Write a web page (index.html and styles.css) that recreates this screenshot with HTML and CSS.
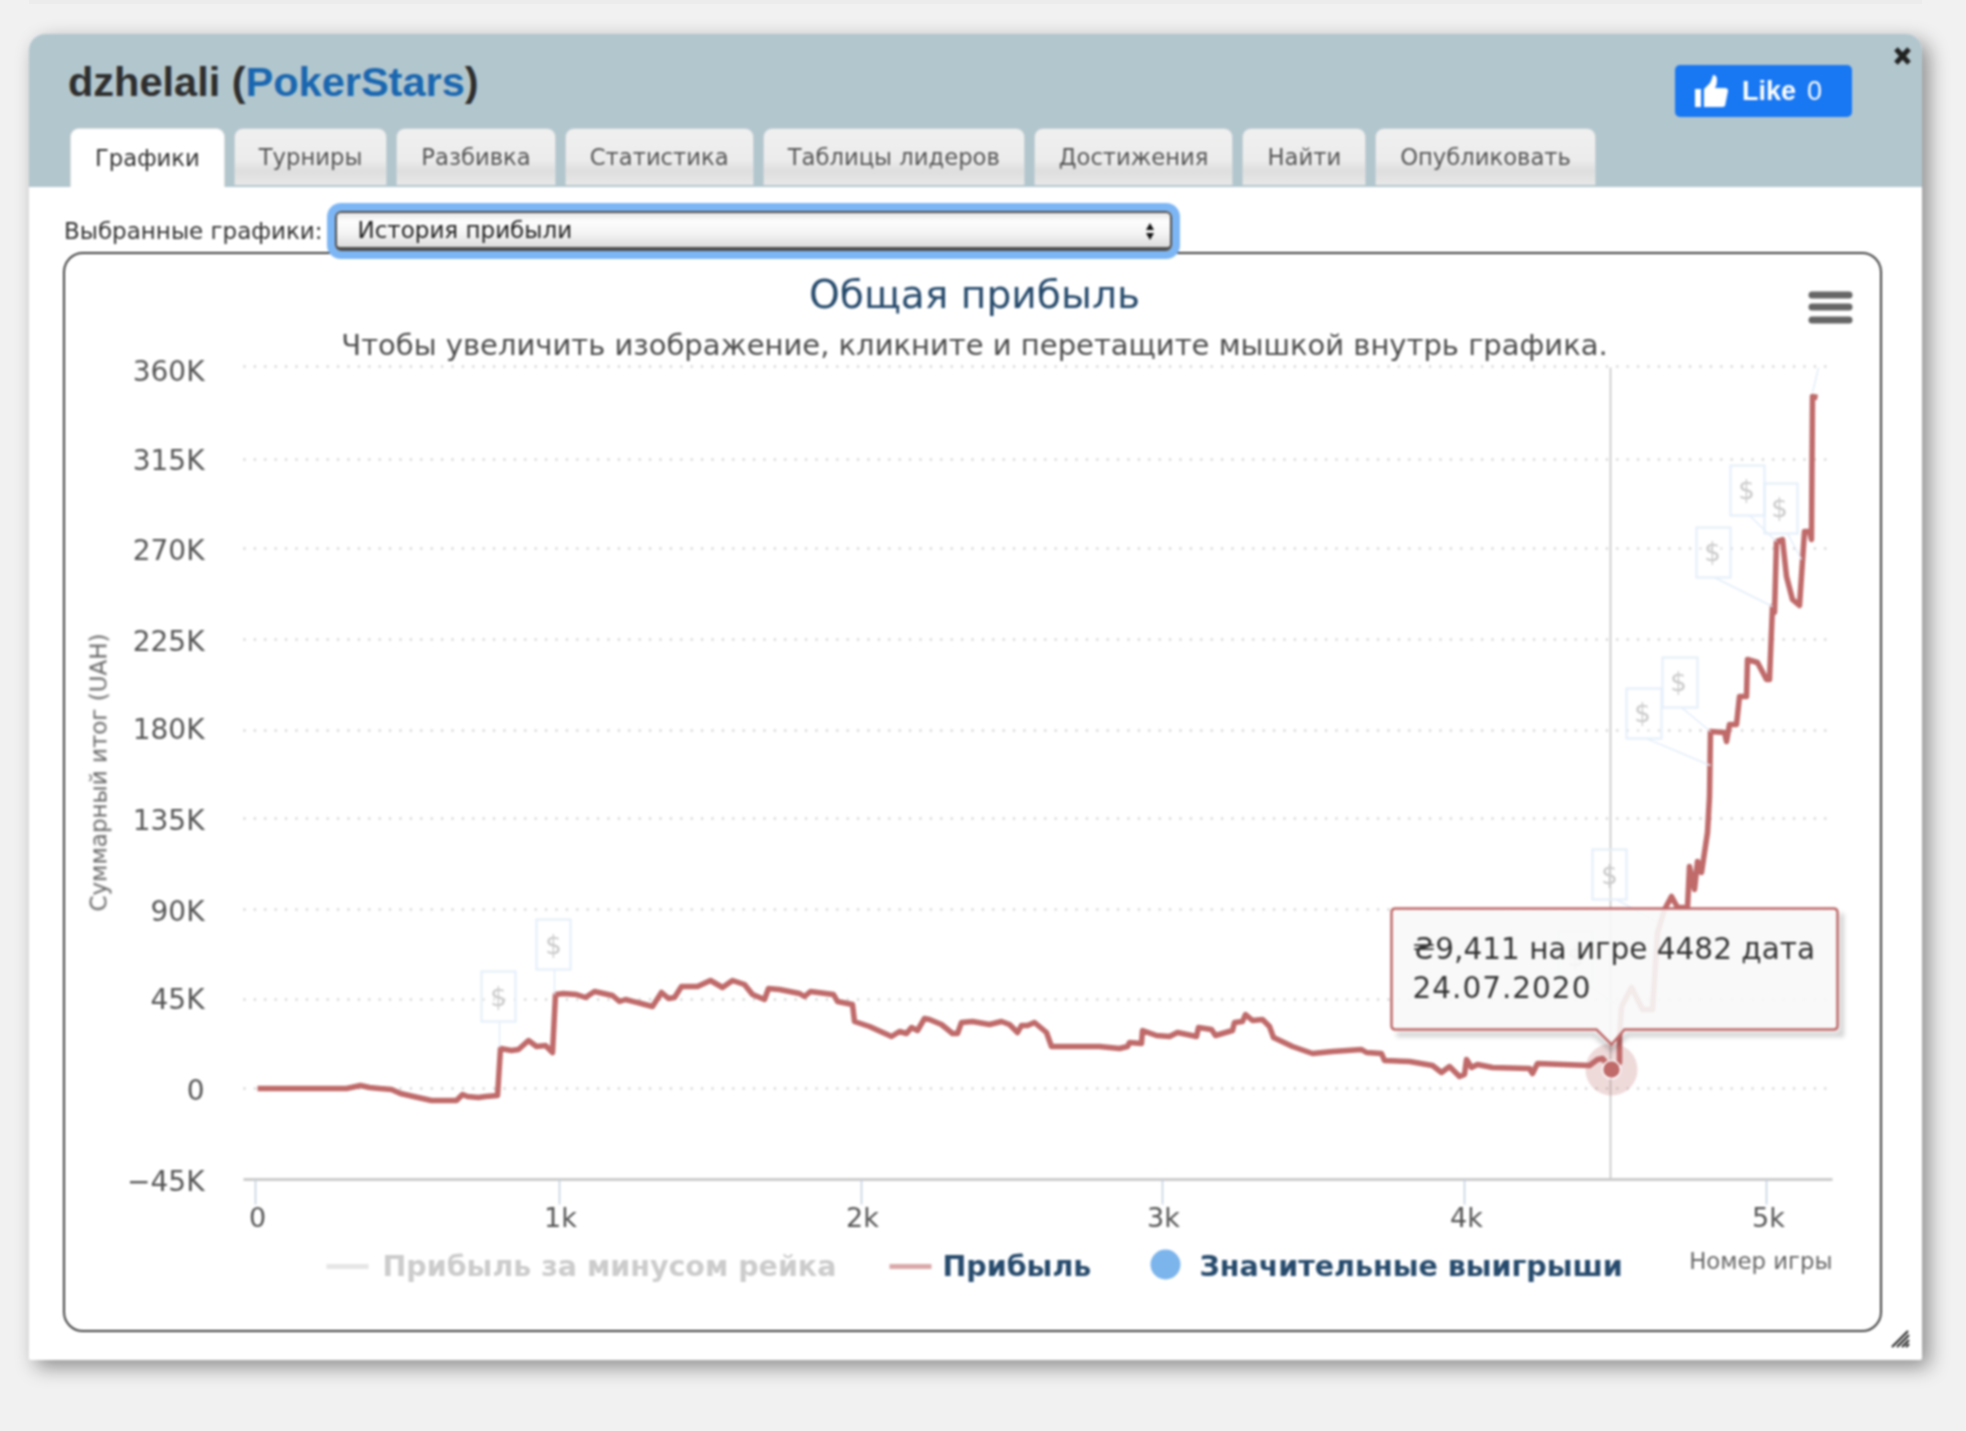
FILE: index.html
```html
<!DOCTYPE html>
<html lang="ru">
<head>
<meta charset="utf-8">
<title>dzhelali (PokerStars)</title>
<link rel="stylesheet" href="styles.css">
</head>
<body>
<div class="topstrip"></div>
<main class="window">
  <header class="head">
    <div class="head-row">
      <h1 class="title">dzhelali (<a class="site" href="#">PokerStars</a>)</h1>
      <a class="like" href="#">
        <svg class="thumb" viewBox="0 0 33 32"><path d="M0 14h6v18H0z"/><path d="M9 14l6-6q2-4 3-8q4 0 4 5q0 5-2 8h10q3 0 3 3l-3 15q-1 1-3 1H9z"/></svg>
        <span class="like-word">Like</span><span class="like-count">0</span>
      </a>
    </div>
    <nav class="tabs">
      <a class="tab active" href="#">Графики</a>
      <a class="tab" href="#">Турниры</a>
      <a class="tab" href="#">Разбивка</a>
      <a class="tab" href="#">Статистика</a>
      <a class="tab" href="#">Таблицы лидеров</a>
      <a class="tab" href="#">Достижения</a>
      <a class="tab" href="#">Найти</a>
      <a class="tab" href="#">Опубликовать</a>
    </nav>
  </header>
  <svg class="close" viewBox="0 0 19 18"><path d="M3 2l13 14M16 2L3 16"/></svg>
  <div class="picker">
    <label class="picker-label" for="graph">Выбранные графики:</label>
    <div class="select-wrap">
      <select class="select" id="graph"><option>История прибыли</option></select>
      <span class="arrows"><i class="arrow-up"></i><i class="arrow-down"></i></span>
    </div>
  </div>
  <section class="chart">
    <svg class="plot" viewBox="65.5 254.5 1814 1075">
      <text class="c-title" x="975" y="308">Общая прибыль</text>
      <text class="c-sub" x="975" y="355">Чтобы увеличить изображение, кликните и перетащите мышкой внутрь графика.</text>
      <g class="menu"><rect x="1809" y="292" width="44" height="7" rx="3.5"/><rect x="1809" y="304" width="44" height="7" rx="3.5"/><rect x="1809" y="317" width="44" height="7" rx="3.5"/></g>

      <g class="grid">
        <path d="M244 367H1828M244 460H1828M244 549H1828M244 640H1828M244 731H1828M244 819H1828M244 910H1828M244 1000H1828M244 1089H1828"/>
      </g>
      <g class="ylab">
        <text x="205" y="381">360K</text><text x="205" y="470">315K</text><text x="205" y="560">270K</text>
        <text x="205" y="651">225K</text><text x="205" y="739">180K</text><text x="205" y="830">135K</text>
        <text x="205" y="921">90K</text><text x="205" y="1009">45K</text><text x="205" y="1100">0</text><text x="205" y="1191">−45K</text>
      </g>
      <text class="y-title" transform="translate(107 773) rotate(-90)">Суммарный итог (UAH)</text>

      <path class="cross" d="M1611 368V1180"/>
      <path class="axis" d="M244 1180H1833"/>
      <path class="ticks" d="M256 1181V1205M560 1181V1205M862 1181V1205M1163 1181V1205M1465 1181V1205M1767 1181V1205"/>
      <g class="xlab">
        <text x="258" y="1227">0</text><text x="561" y="1227">1k</text><text x="863" y="1227">2k</text>
        <text x="1164" y="1227">3k</text><text x="1467" y="1227">4k</text><text x="1769" y="1227">5k</text>
      </g>

      <path class="series" d="M258 1089L347 1089L361 1086L370 1088L392 1090L401 1094L414 1097L432 1101L457 1101L463 1095L468 1097L479 1098L486 1097L498 1096L501 1049L512 1051L519 1050L529 1041L537 1047L546 1046L553 1053L556 995L564 994L577 995L586 998L595 992L613 996L620 1002L626 1000L653 1007L662 993L669 999L675 998L682 987L698 987L711 981L723 988L733 981L745 985L753 995L765 1000L769 989L780 990L800 994L805 997L811 992L834 995L838 1002L853 1005L855 1022L870 1027L892 1037L900 1032L907 1034L912 1028L918 1031L925 1019L930 1020L942 1025L953 1034L958 1034L962 1023L973 1022L990 1025L1002 1022L1010 1025L1018 1033L1022 1026L1028 1026L1035 1023L1047 1033L1052 1047L1100 1047L1120 1049L1128 1047L1130 1043L1142 1044L1143 1031L1157 1036L1170 1037L1178 1033L1197 1037L1199 1028L1212 1030L1216 1036L1233 1031L1235 1023L1243 1022L1246 1015L1253 1021L1263 1020L1270 1027L1274 1038L1293 1047L1313 1054L1333 1052L1362 1050L1367 1053L1382 1054L1385 1061L1410 1062L1433 1066L1442 1073L1450 1067L1460 1077L1465 1075L1467 1060L1472 1068L1478 1065L1493 1068L1530 1069L1533 1074L1538 1064L1590 1066L1598 1060L1603 1059L1612 1070L1620 1063L1620 1037L1622 1007L1632 988L1643 1010L1653 1010L1658 933L1665 910L1672 897L1678 908L1688 908L1690 867L1695 890L1698 862L1702 873L1708 833L1710 797L1711 732L1725 733L1727 742L1730 725L1737 725L1740 697L1747 697L1748 660L1758 663L1767 680L1770 680L1773 607L1775 613L1777 542L1783 540L1787 577L1793 600L1800 606L1805 532L1810 532L1812 540L1813 397L1818 398"/>

      <g class="flags">
        <path class="flag-line" d="M500 1022V1048M555 970V995M1617 900L1658 923M1583 982L1620 1007M1647 739L1711 766M1682 708L1711 732M1715 578L1773 607M1750 516L1777 542M1788 534L1802 560M1813 393L1819 368"/>
        <g class="flag"><rect x="482" y="972" width="34" height="50"/><text x="499" y="1006">$</text></g>
        <g class="flag"><rect x="537" y="920" width="34" height="50"/><text x="554" y="954">$</text></g>
        <g class="flag"><rect x="1559" y="932" width="34" height="50"/><text x="1576" y="966">$</text></g>
        <g class="flag"><rect x="1593" y="850" width="34" height="50"/><text x="1610" y="884">$</text></g>
        <g class="flag"><rect x="1627" y="689" width="35" height="50"/><text x="1643" y="722">$</text></g>
        <g class="flag"><rect x="1663" y="658" width="35" height="50"/><text x="1679" y="691">$</text></g>
        <g class="flag"><rect x="1697" y="528" width="34" height="50"/><text x="1713" y="561">$</text></g>
        <g class="flag"><rect x="1731" y="466" width="34" height="50"/><text x="1747" y="499">$</text></g>
        <g class="flag"><rect x="1765" y="484" width="33" height="50"/><text x="1780" y="517">$</text></g>
      </g>

      <circle class="halo" cx="1612" cy="1070" r="26"/>
      <circle class="dot" cx="1612" cy="1070" r="9"/>

      <path class="tip-shadow" d="M1397 1035H1595L1612 1050L1628 1035H1842V914"/>
      <path class="tip" d="M1396 909H1834Q1838 909 1838 913V1026Q1838 1030 1834 1030H1625L1612 1045L1597 1030H1396Q1392 1030 1392 1026V913Q1392 909 1396 909Z"/>
      <text class="tip-text" x="1413" y="959">₴9,411 на игре 4482 дата</text>
      <text class="tip-text tip-date" x="1413" y="998">24.07.2020</text>

      <g class="legend">
        <path class="leg-off-line" d="M327 1267H369"/>
        <text class="leg-off" x="383" y="1276">Прибыль за минусом рейка</text>
        <path class="leg-red-line" d="M890 1267H932"/>
        <text class="leg-on" x="943" y="1276">Прибыль</text>
        <circle class="leg-dot" cx="1166" cy="1265" r="15"/>
        <text class="leg-on" x="1200" y="1276">Значительные выигрыши</text>
      </g>
      <text class="x-title" x="1833" y="1269">Номер игры</text>
    </svg>
  </section>
  <svg class="grip" viewBox="0 0 19 18"><path d="M1 17L17 1M6 17L18 5M11 17L18 10M15 17L18 14"/></svg>
</main>
</body>
</html>
```
FILE: styles.css
```css
* { box-sizing: border-box; }
html, body { margin: 0; }
body {
  background: #f1f1f1;
  min-height: 1431px;
  padding: 30px 0 0 29px;
  font-family: "DejaVu Sans", sans-serif;
  overflow: hidden;
}
.topstrip {
  height: 4px;
  margin: -30px 0 30px 0;
  width: 1893px;
  background: #ececec;
}
.window {
  position: relative;
  width: 1893px;
  height: 1326px;
  background: #fff;
  border-radius: 16px 16px 2px 2px;
  box-shadow: 7px 7px 20px rgba(0, 0, 0, .42);
  filter: blur(.8px);
}
.head {
  height: 153px;
  background: #b2c6cd;
  border-radius: 16px 16px 0 0;
  padding-left: 41px;
}
.head-row {
  height: 94px;
  display: flex;
  justify-content: space-between;
  align-items: flex-start;
  padding-right: 70px;
}
.title {
  margin: 24px 0 0 -2px;
  font: bold 41.500px/48px "Liberation Sans", sans-serif;
  color: #2e2e2e;
}
.site { color: #1a67b0; text-decoration: none; }
.like {
  margin-top: 31px;
  width: 177px;
  height: 52px;
  background: #1877f2;
  border-radius: 5px;
  display: flex;
  align-items: center;
  padding-left: 20px;
  color: #fff;
  text-decoration: none;
  font: 27px "Liberation Sans", sans-serif;
}
.thumb { width: 33px; height: 32px; fill: #fff; margin-right: 14px; }
.like-word { font-weight: bold; margin-right: 11px; }
.tabs { display: flex; gap: 9px; height: 59px; }
.tab {
  height: 57px;
  padding: 0 24px;
  display: flex;
  align-items: center;
  justify-content: center;
  border-radius: 9px 9px 0 0;
  background: linear-gradient(#f0f0f0, #ececec 55%, #dedede 75%, #e8e8e8);
  border: 1px solid #c8d2d6;
  border-bottom: 0;
  color: #555;
  font-size: 22.700px;
  text-decoration: none;
}
.tab.active { height: 59px; background: #fff; color: #333; border-color: #ddd; }
.close {
  position: absolute;
  left: 1864px;
  top: 13px;
  width: 19px;
  height: 18px;
  fill: none;
  stroke: #222;
  stroke-width: 5;
}
.picker {
  height: 65px;
  padding: 24px 0 0 35px;
  display: flex;
  align-items: flex-start;
  gap: 12px;
}
.picker-label { line-height: 40px; font-size: 23px; color: #333; }
.select-wrap { position: relative; z-index: 2; width: 837px; height: 40px; }
.select {
  appearance: none;
  display: block;
  width: 100%;
  height: 40px;
  padding: 0 0 0 21px;
  border: 2px solid #4f4f4f;
  border-bottom-width: 4px;
  border-radius: 6px;
  box-shadow: 0 0 0 8px #7db6f5;
  background: linear-gradient(#e6e6e6, #fdfdfd 25%, #f4f4f4 60%, #dcdcdc);
  font: 23px "DejaVu Sans", sans-serif;
  color: #222;
}
.arrows {
  position: absolute;
  right: 18px;
  top: 12px;
  display: flex;
  flex-direction: column;
  gap: 3px;
}
.arrow-up, .arrow-down { width: 0; height: 0; border: 4px solid transparent; }
.arrow-up { border-top: 0; border-bottom: 7px solid #111; }
.arrow-down { border-bottom: 0; border-top: 7px solid #111; }
.chart {
  margin: 0 0 0 34px;
  width: 1819px;
  height: 1080px;
  border: 2.5px solid #404040;
  border-radius: 20px;
}
.plot { display: block; width: 1814px; height: 1075px; }
.plot text { font-family: "DejaVu Sans", sans-serif; }
.c-title { font-size: 39.200px; fill: #274b6d; text-anchor: middle; }
.c-sub { font-size: 29px; fill: #4d4d4d; text-anchor: middle; }
.menu { fill: #666; }
.grid { fill: none; stroke: #d2d2d2; stroke-width: 2.500; stroke-dasharray: 2 8.400; }
.ylab text { font-size: 28px; fill: #555; text-anchor: end; }
.xlab text { font-size: 27px; fill: #555; text-anchor: middle; }
.y-title { font-size: 23px; fill: #666; text-anchor: middle; }
.x-title { font-size: 22.800px; fill: #666; text-anchor: end; }
.cross { stroke: #c0c0c0; stroke-width: 1.500; fill: none; }
.axis { stroke: #ccc; stroke-width: 3; fill: none; }
.ticks { stroke: #c0d0e0; stroke-width: 1.500; fill: none; }
.series { fill: none; stroke: #c06a6a; stroke-width: 5.500; stroke-linejoin: round; }
.flag-line { fill: none; stroke: #e3eefa; stroke-width: 1.500; }
.flag rect { fill: #fff; fill-opacity: .25; stroke: #e3eefa; stroke-width: 2; }
.flag text { font-size: 26px; fill: #c9c9c9; text-anchor: middle; }
.halo { fill: #c06a6a; fill-opacity: .25; }
.dot { fill: #c06a6a; stroke: #fff; stroke-width: 1.500; }
.tip-shadow { fill: none; stroke: #000; stroke-opacity: .18; stroke-width: 5; filter: blur(2px); }
.tip {
  fill: #f8f8f8;
  fill-opacity: .9;
  stroke: #c06a6a;
  stroke-width: 2.500;
}
.tip-text { font-size: 29.500px; fill: #333; }
.tip-date { letter-spacing: 1px; }
.leg-off-line { stroke: #e6e6e6; stroke-width: 5; fill: none; }
.leg-red-line { stroke: #dba9a9; stroke-width: 5; fill: none; }
.leg-dot { fill: #7cb5ec; }
.leg-off { font-size: 28.500px; font-weight: bold; fill: #ccc; }
.leg-on { font-size: 28.500px; font-weight: bold; fill: #274b6d; }
.grip {
  position: absolute;
  left: 1862px;
  top: 1296px;
  width: 19px;
  height: 18px;
  fill: none;
  stroke: #222;
  stroke-width: 2;
}
```
